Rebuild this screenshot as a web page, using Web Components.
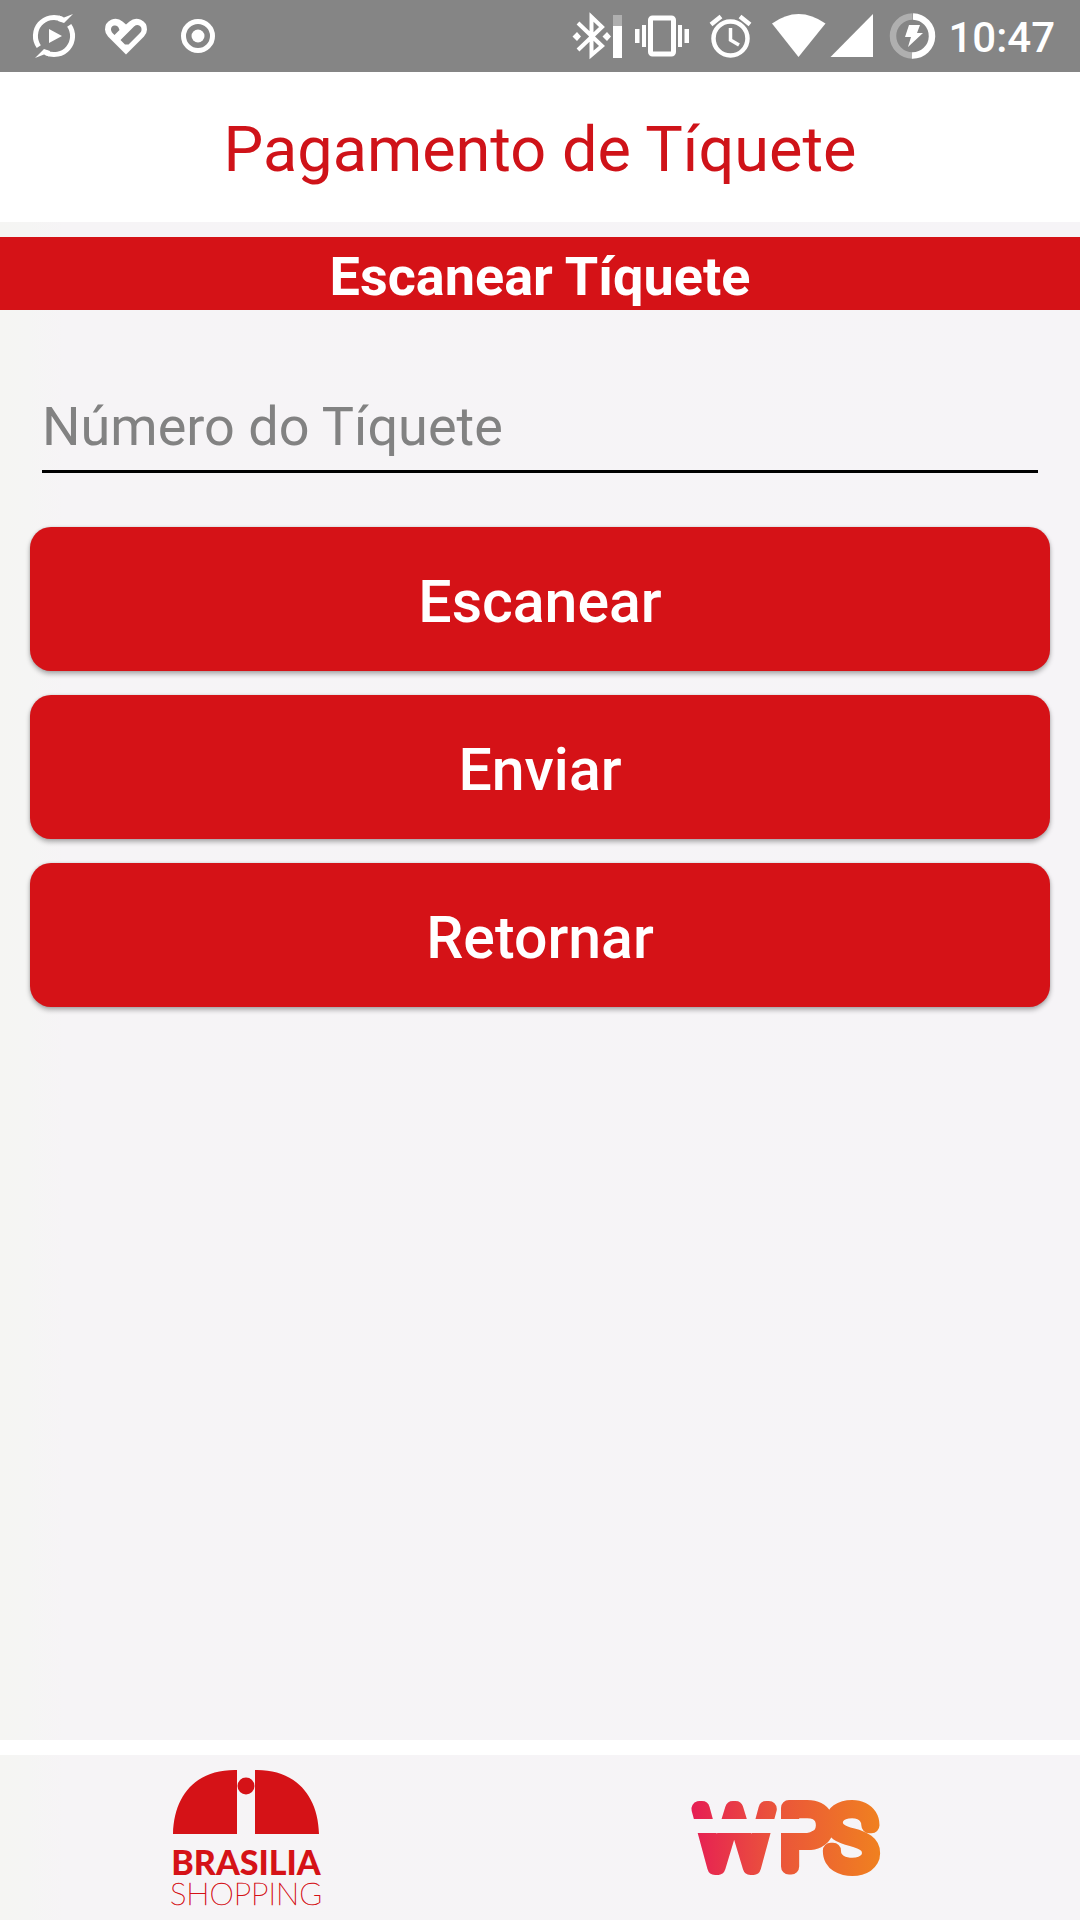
<!DOCTYPE html>
<html lang="pt-BR">
<head>
<meta charset="utf-8">
<meta name="viewport" content="width=device-width, initial-scale=1">
<title>Pagamento de Tíquete</title>
<style>
  body { margin: 0; font-family: Roboto, "Noto Sans", sans-serif; }
</style>
</head>
<body>
<ticket-app>
  <status-bar slot="status" time="10:47"></status-bar>
  <page-header slot="header">Pagamento de Tíquete</page-header>
  <section-title>Escanear Tíquete</section-title>
  <ticket-form>
    <text-field label="Número do Tíquete"></text-field>
    <action-button>Escanear</action-button>
    <action-button>Enviar</action-button>
    <action-button>Retornar</action-button>
  </ticket-form>
  <brand-footer slot="footer">
    <brasilia-logo></brasilia-logo>
    <wps-logo></wps-logo>
  </brand-footer>
</ticket-app>
<script>
function define(name, html, setup) {
  const template = document.createElement('template');
  template.innerHTML = html;
  customElements.define(name, class extends HTMLElement {
    constructor() {
      super();
      this.attachShadow({ mode: 'open' }).append(template.content.cloneNode(true));
    }
    connectedCallback() {
      if (setup) setup(this, this.shadowRoot);
    }
  });
}

define('ticket-app', `
  <style>
    :host {
      --red: #d51217;
      display: flex; flex-direction: column; min-height: 100vh;
      background: linear-gradient(90deg, #f5f5f3 0, #f5f5f4 28px, #f6f4f6 64px, #f6f4f7 100%);
    }
    main { flex: 1; padding-top: 15px; }
  </style>
  <slot name="status"></slot>
  <slot name="header"></slot>
  <main><slot></slot></main>
  <slot name="footer"></slot>`);

define('status-bar', `
  <style>
    :host {
      display: flex; justify-content: space-between; height: 72px;
      padding: 0 25px 0 18px; background: #858585; color: #fff;
    }
    div { display: flex; align-items: center; }
    svg { display: block; height: 72px; fill: #fff; }
    time { padding-top: 3px; font-size: 42px; line-height: 69px; font-weight: 500; }
  </style>
  <div>
    <svg width="72" viewBox="18 0 72 72">
      <g fill="none" stroke="#fff" stroke-width="5">
        <path d="M38.800 46.600A18.500 18.500 0 0 1 62 19.300"/>
        <path d="M69.200 25.400A18.500 18.500 0 0 1 46 52.700"/>
      </g>
      <path d="M59 15.500L64 17.500L73 14L64 23L58 21ZM49 56.500L44 54.500L35 58L44 49L50 51ZM49 29V43L62 36Z"/>
    </svg>
    <svg width="72" viewBox="90 0 72 72">
      <path d="M126 54.500L108 36.500Q105 33 105 29.500A10.500 10.500 0 0 1 122.500 21.500L126 24.500L129.500 21.500A10.500 10.500 0 0 1 147 29.500Q147 33 144 36.500Z"/>
      <path d="M114.500 35Q111 32 111 29.500A4 4 0 0 1 118.500 27.500L119.500 30ZM120.500 40L134 26.500Q138 23.500 141 27Q142.500 30.500 140 33L128.500 44.500H125Z" fill="#858585"/>
    </svg>
    <svg width="72" viewBox="162 0 72 72">
      <circle cx="198" cy="36" r="14.500" fill="none" stroke="#fff" stroke-width="5"/>
      <circle cx="198" cy="36" r="6.500"/>
    </svg>
  </div>
  <div>
    <svg width="66" viewBox="564 0 66 72">
      <path d="M578 23L602 46L591.500 55V17L602 27L578 50" fill="none" stroke="#fff" stroke-width="4"/>
      <path d="M577 32L581 36.500L577 41L572.500 36.500ZM607 32L611 36.500L607 41L602.500 36.500ZM613 26H622V58H613Z"/>
      <path d="M613 15H622V26H613Z" opacity=".35"/>
    </svg>
    <svg width="70" viewBox="630 0 70 72">
      <rect x="650.500" y="18" width="23" height="36" rx="2" fill="none" stroke="#fff" stroke-width="5"/>
      <path d="M635 29H639.500V43H635ZM642 25H646V47H642ZM678 25H682V47H678ZM684.500 29H689V43H684.500Z"/>
    </svg>
    <svg width="62" viewBox="700 0 62 72">
      <g fill="none" stroke="#fff">
        <circle cx="730.500" cy="38.500" r="17" stroke-width="4.500"/>
        <path d="M730.500 28V40L739 45" stroke-width="3.500"/>
        <path d="M711 24.500L721 16.500M740 16.500L750 24.500" stroke-width="4.500"/>
      </g>
    </svg>
    <svg width="68" viewBox="762 0 68 72">
      <path d="M772 23.500Q798.500 4.500 825.500 23.500L798.500 57Z"/>
    </svg>
    <svg width="52" viewBox="830 0 52 72"><path d="M830.500 57L873 14V57Z"/></svg>
    <svg width="66" viewBox="882 0 66 72">
      <g fill="none" stroke="#fff" stroke-width="6.500">
        <path d="M912.500 16.500A19.500 19.500 0 0 0 912.500 55.500" opacity=".35"/>
        <path d="M913 16.500A19.500 19.500 0 0 1 912 55.500"/>
      </g>
      <path d="M909 25H920L917 33H923L908 47L911 37H905Z"/>
    </svg>
    <time></time>
  </div>`,
  (host, root) => { root.querySelector('time').textContent = host.getAttribute('time'); });

define('page-header', `
  <style>
    :host { display: block; background: #fff; color: #cf1319; padding: 41px 16px 35px; }
    h1 { margin: 0; font-size: 63px; line-height: 74px; font-weight: 400; text-align: center; }
  </style>
  <h1><slot></slot></h1>`);

define('section-title', `
  <style>
    :host { display: block; background: var(--red); color: #fff; }
    h2 { margin: 0; padding: 8px 16px 1px; font-size: 54px; line-height: 64px; font-weight: 700; text-align: center; }
  </style>
  <h2><slot></slot></h2>`);

define('ticket-form', `
  <style>
    :host { display: block; }
    form { display: flex; flex-direction: column; gap: 24px; padding: 80px 30px 24px; }
  </style>
  <form><slot></slot></form>`);

define('text-field', `
  <style>
    :host { display: block; padding: 0 12px 30px; }
    input {
      box-sizing: border-box; display: block; width: 100%; height: 83px; margin: 0;
      padding: 0 0 7px; border: 0; border-bottom: 3px solid #000; border-radius: 0;
      background: none; outline: 0; font: 400 54px/64px Roboto, sans-serif; color: #222;
    }
    input::placeholder { color: #828282; opacity: 1; }
  </style>
  <input type="text">`,
  (host, root) => {
    const input = root.querySelector('input');
    input.placeholder = host.getAttribute('label');
    input.setAttribute('aria-label', host.getAttribute('label'));
  });

define('action-button', `
  <style>
    :host { display: block; }
    button {
      display: block; width: 100%; height: 144px; margin: 0; padding: 5px 16px 0; border: 0;
      border-radius: 21px; background: var(--red); color: #fff; cursor: pointer;
      font: 500 59px/70px Roboto, sans-serif;
      box-shadow: 0 3px 5px rgba(0, 0, 0, .3), 0 0 3px rgba(0, 0, 0, .12);
    }
  </style>
  <button type="button"><slot></slot></button>`);

define('brand-footer', `
  <style>
    :host { display: flex; border-top: 15px solid #fff; height: 165px; }
    ::slotted(*) { flex: 1; padding-right: 50px; }
  </style>
  <slot></slot>`);

define('brasilia-logo', `
  <style>
    :host { display: flex; justify-content: center; }
    svg { display: block; fill: #d51217; }
    text { font-family: Lato, sans-serif; text-anchor: middle; }
  </style>
  <svg width="190" height="165" viewBox="150 1755 190 165" role="img" aria-label="Brasilia Shopping">
    <path d="M173 1834C174 1793 198 1769 237 1770V1834ZM255 1834V1770C293 1769 318 1793 319 1834Z"/>
    <circle cx="246" cy="1786" r="8.500"/>
    <text x="246" y="1875" font-size="34" font-weight="900">BRASILIA</text>
    <text x="246" y="1905" font-size="31" font-weight="100" stroke="#d51217" stroke-width=".6">SHOPPING</text>
  </svg>`);

define('wps-logo', `
  <style>
    :host { display: flex; justify-content: center; align-items: center; }
    svg { display: block; }
    text { font-family: Roboto, sans-serif; font-weight: 100; font-size: 82px; }
  </style>
  <svg width="230" height="120" viewBox="0 -2 230 120" role="img" aria-label="WPS">
    <defs>
      <linearGradient id="warm" gradientUnits="userSpaceOnUse" x1="22" y1="0" x2="209" y2="0">
        <stop offset="0" stop-color="#e61e54"/>
        <stop offset=".4" stop-color="#ea503d"/>
        <stop offset="1" stop-color="#f08020"/>
      </linearGradient>
    </defs>
    <text x="27 111 157" y="87" fill="url(#warm)" stroke="url(#warm)" stroke-width="16" stroke-linejoin="round">WPS</text>
    <path d="M18 39H107V53H18ZM109 39H137Q144 40 144 46T137 53H109Z" fill="#f6f4f7"/>
  </svg>`);
</script>
</body>
</html>
